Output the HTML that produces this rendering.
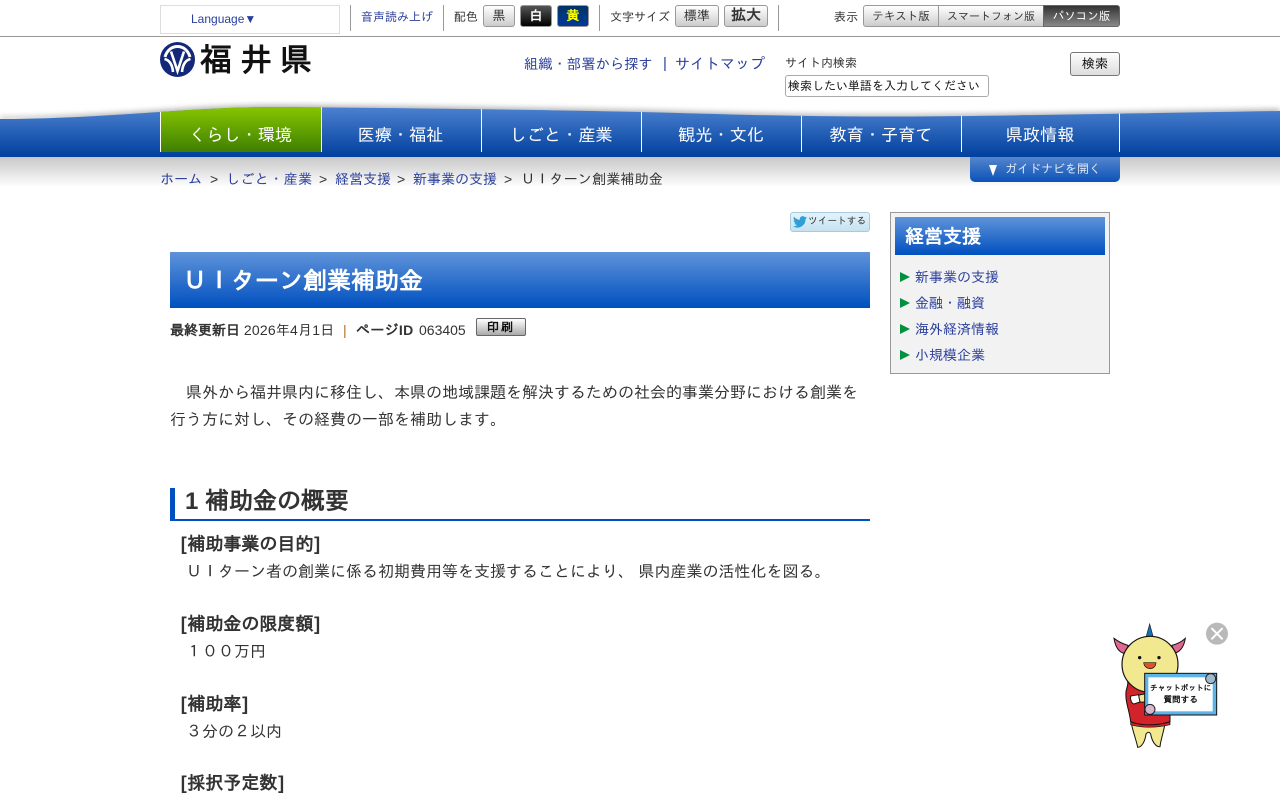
<!DOCTYPE html>
<html lang="ja"><head><meta charset="utf-8"><title>UIターン創業補助金</title>
<style>
*{box-sizing:border-box}
html,body{margin:0;padding:0;width:1280px;height:800px;overflow:hidden;background:#fff}
body{font-family:"Liberation Sans","IPAGothic",sans-serif;color:#333;position:relative}
.a{position:absolute;white-space:nowrap}
.l{color:#2a3f9c}
.sep{position:absolute;top:5px;width:1px;height:26px;background:#999}
.btn{position:absolute;top:5px;height:22px;border:1px solid #999;border-radius:3px;background:linear-gradient(#fff,#ccc);font-size:13px;line-height:20px;text-align:center;color:#333;white-space:nowrap}
.nav{position:absolute;top:108px;height:44px;font-size:17.200px;line-height:54px;text-align:center;color:#fff}
.side{position:absolute;left:915px;font-size:14px;color:#2a3f9c;white-space:nowrap}
.tri{position:absolute;left:900px;width:0;height:0;border-left:10px solid #00903f;border-top:5px solid transparent;border-bottom:5px solid transparent}
.body{position:absolute;font-size:16px;white-space:nowrap;color:#333}
.h4{position:absolute;left:180px;font-size:18px;font-weight:bold;white-space:nowrap;color:#333}
.h4 i{font-style:normal;margin:0 .7px}
.bc{position:absolute;top:171px;font-size:14px;white-space:nowrap}
</style></head><body>

<div class="a" style="left:0;top:36px;width:1280px;height:1px;background:#999"></div>
<div class="a" style="left:160px;top:5px;width:180px;height:29px;border:1px solid #ddd;font-size:12px;line-height:27px;padding-left:30px;color:#2a3f9c">Language▼</div>
<div class="sep" style="left:350px"></div>
<div class="a l" style="left:361px;top:10px;font-size:12px">音声読み上げ</div>
<div class="sep" style="left:443px"></div>
<div class="a" style="left:454px;top:10px;font-size:12px">配色</div>
<div class="btn" style="left:483px;width:32px">黒</div>
<div class="btn" style="left:520px;width:32px;background:linear-gradient(#555,#000);color:#fff;font-weight:bold">白</div>
<div class="btn" style="left:557px;width:32px;background:linear-gradient(#036,#003a9a);color:#ff0;font-weight:bold">黄</div>
<div class="sep" style="left:599px"></div>
<div class="a" style="left:610px;top:10px;font-size:12px">文字サイズ</div>
<div class="btn" style="left:675px;width:44px">標準</div>
<div class="btn" style="left:724px;width:44px;font-weight:bold;font-size:15px">拡大</div>
<div class="sep" style="left:778px"></div>
<div class="a" style="left:834px;top:10px;font-size:12px">表示</div>
<div class="btn" style="left:863px;width:76px;border-radius:3px 0 0 3px;font-size:11.500px;line-height:23px">テキスト版</div>
<div class="btn" style="left:938px;width:106px;border-radius:0;font-size:11px;line-height:23px">スマートフォン版</div>
<div class="btn" style="left:1043px;width:77px;border-radius:0 3px 3px 0;font-size:11.500px;line-height:23px;background:linear-gradient(#333,#888);color:#fff;border-color:#666">パソコン版</div>

<svg class="a" style="left:160px;top:42px" width="35" height="35" viewBox="0 0 35 35">
<circle cx="17.500" cy="17.500" r="17.500" fill="#14287a"/>
<path d="M5 15C7 8 12 4.500 17.500 4.500S28 8 30 15" fill="none" stroke="#fff" stroke-width="3"/>
<path d="M11 9.500L17.500 29 24 9.500M4.500 17c5 1 8 6 8.500 13M30.500 17c-5 1-8 6-8.500 13" fill="none" stroke="#fff" stroke-width="2.600"/>
</svg>
<div class="a" style="left:200px;top:41px;font-size:32px;line-height:38px;letter-spacing:8px;color:#111;font-weight:bold">福井県</div>

<div class="a l" style="left:524px;top:56px;font-size:14.300px">組織・部署から探す</div>
<div class="a" style="left:663px;top:55px;font-size:15px;color:#2a3f9c">|</div>
<div class="a l" style="left:675px;top:56px;font-size:15px">サイトマップ</div>
<div class="a" style="left:785px;top:56px;font-size:12px">サイト内検索</div>
<div class="a" style="left:785px;top:75px;width:204px;height:22px;border:1px solid #aaa;border-radius:3px;font-size:12px;line-height:20px;padding-left:2px;color:#111;background:#fff">検索したい単語を入力してください</div>
<div class="a" style="left:1070px;top:52px;width:50px;height:24px;border:1px solid #777;border-radius:3px;background:linear-gradient(#fdfdfd,#ddd);font-size:13px;line-height:22px;text-align:center;color:#111">検索</div>

<svg class="a" style="left:0;top:90px" width="1280" height="100" viewBox="0 0 1280 100">
<defs>
<linearGradient id="g" gradientUnits="userSpaceOnUse" x1="0" y1="18" x2="0" y2="67"><stop offset="0" stop-color="#4a80cf"/><stop offset="1" stop-color="#003f9e"/></linearGradient>
<linearGradient id="gr" gradientUnits="userSpaceOnUse" x1="0" y1="18" x2="0" y2="62"><stop offset="0" stop-color="#84c400"/><stop offset="1" stop-color="#3f7f00"/></linearGradient>
<linearGradient id="s" x1="0" y1="0" x2="0" y2="1"><stop offset="0" stop-color="#000" stop-opacity=".22"/><stop offset="1" stop-color="#000" stop-opacity="0"/></linearGradient>
<filter id="b" x="-5%" y="-30%" width="110%" height="160%"><feGaussianBlur stdDeviation="3"/></filter>
<clipPath id="c"><path d="M0 29C50 29 100 26 160 22C200 19 240 17 280 17C400 18 560 20 640 22C720 24 800 27 900 26.500C1000 26 1100 24 1280 21V67H0Z"/></clipPath>
</defs>
<rect x="0" y="67" width="1280" height="30" fill="url(#s)"/>
<path d="M0 27C50 27 100 24 160 20C200 17 240 15 280 15C400 16 560 18 640 20C720 22 800 25 900 24.500C1000 24 1100 22 1280 19V30H0Z" fill="#000" opacity=".3" filter="url(#b)"/>
<path d="M0 29C50 29 100 26 160 22C200 19 240 17 280 17C400 18 560 20 640 22C720 24 800 27 900 26.500C1000 26 1100 24 1280 21V67H0Z" fill="url(#g)"/>
<g clip-path="url(#c)">
<rect x="160" y="10" width="161" height="52" fill="url(#gr)"/>
<path d="M160.500 10V62M321.500 10V62M481.500 10V62M641.500 10V62M801.500 10V62M961.500 10V62M1119.500 10V62" stroke="#fff" stroke-width="1"/>
</g>
</svg>
<div class="nav" style="left:160px;width:161px">くらし・環境</div>
<div class="nav" style="left:320px;width:161px">医療・福祉</div>
<div class="nav" style="left:481px;width:160px">しごと・産業</div>
<div class="nav" style="left:641px;width:160px">観光・文化</div>
<div class="nav" style="left:801px;width:160px">教育・子育て</div>
<div class="nav" style="left:961px;width:158px">県政情報</div>

<div class="a" style="left:970px;top:157px;width:150px;height:25px;border-radius:0 0 5px 5px;background:linear-gradient(#5586cc,#0b52b8);color:#dfe8f6;font-size:12px;line-height:25px;padding-left:35px">ガイドナビを開く</div>
<div class="a" style="left:989px;top:165px;width:0;height:0;border-top:11px solid #fff;border-left:4px solid transparent;border-right:4px solid transparent"></div>

<span class="bc l" style="left:160px">ホーム</span><span class="bc" style="left:210px">&gt;</span>
<span class="bc l" style="left:226px;letter-spacing:.4px">しごと・産業</span><span class="bc" style="left:319px">&gt;</span>
<span class="bc l" style="left:335px">経営支援</span><span class="bc" style="left:397px">&gt;</span>
<span class="bc l" style="left:413px">新事業の支援</span><span class="bc" style="left:504px">&gt;</span>
<span class="bc" style="left:521px;letter-spacing:.2px">ＵＩターン創業補助金</span>

<div class="a" style="left:790px;top:212px;width:80px;height:20px;border:1px solid #a9c9dd;border-radius:3px;background:linear-gradient(#e4f3fb,#c5e2f1)"></div>
<svg class="a" style="left:793px;top:216px" width="14" height="12" viewBox="0 0 24 20"><path d="M24 2.400c-.9.400-1.800.7-2.800.8 1-.6 1.800-1.500 2.200-2.700-1 .6-2 1-3.100 1.200A4.900 4.900 0 0 0 11.900 6.200C7.800 6 4.200 4 1.700.9c-1.300 2.200-.7 5.100 1.500 6.600-.8 0-1.600-.2-2.200-.6 0 2.400 1.700 4.400 3.900 4.900-.7.200-1.500.2-2.200.1.600 2 2.400 3.400 4.600 3.400A9.900 9.900 0 0 1 0 17.300 14 14 0 0 0 21.500 4.900c1-.7 1.800-1.600 2.500-2.500z" fill="#2f9fd8"/></svg>
<div class="a" style="left:808px;top:216px;font-size:9.700px;color:#333">ツイートする</div>

<div class="a" style="left:170px;top:252px;width:700px;height:56px;background:linear-gradient(#5f93d9,#0050c0);color:#fff;font-size:24px;font-weight:bold;line-height:60px;padding-left:13px">ＵＩターン創業補助金</div>

<div class="a" style="left:170px;top:322px;font-size:14px;color:#333"><b>最終更新日</b> <span style="letter-spacing:.2px">2026年4月1日</span></div>
<div class="a" style="left:343px;top:322px;font-size:14px;color:#b07020">|</div>
<div class="a" style="left:356px;top:322px;font-size:14px;color:#333;font-weight:bold;letter-spacing:.3px">ページID</div>
<div class="a" style="left:419px;top:322px;font-size:14px;color:#333">063405</div>
<div class="a" style="left:476px;top:318px;width:50px;height:18px;border:1px solid #666;border-radius:2px;background:linear-gradient(#fff,#aaa);font-size:12px;font-weight:bold;line-height:16px;text-align:center;color:#111;letter-spacing:2px">印刷</div>

<div class="body" style="left:170px;top:380px;line-height:27px">&#12288;県外から福井県内に移住し、本県の地域課題を解決するための社会的事業分野における創業を<br>行う方に対し、その経費の一部を補助します。</div>

<div class="a" style="left:170px;top:488px;width:700px;height:33px;border-left:5px solid #0050c0;border-bottom:2px solid #0050c0;font-size:24px;font-weight:bold;line-height:28px;padding-left:10px;color:#333">1 補助金の概要</div>

<div class="h4" style="top:534px"><i>[</i>補助事業の目的<i>]</i></div>
<div class="body" style="left:186px;top:563px">ＵＩターン者の創業に係る初期費用等を支援することにより、 県内産業の活性化を図る。</div>
<div class="h4" style="top:614px"><i>[</i>補助金の限度額<i>]</i></div>
<div class="body" style="left:186px;top:643px">１００万円</div>
<div class="h4" style="top:694px"><i>[</i>補助率<i>]</i></div>
<div class="body" style="left:186px;top:723px">３分の２以内</div>
<div class="h4" style="top:773px"><i>[</i>採択予定数<i>]</i></div>

<div class="a" style="left:890px;top:212px;width:220px;height:162px;border:1px solid #999;background:#f2f2f2"></div>
<div class="a" style="left:895px;top:217px;width:210px;height:38px;background:linear-gradient(#5f93d9,#0050c0);color:#fff;font-size:19px;font-weight:bold;line-height:42px;padding-left:10px">経営支援</div>
<div class="tri" style="top:272px"></div><div class="side" style="top:269px">新事業の支援</div>
<div class="tri" style="top:298px"></div><div class="side" style="top:295px">金融・融資</div>
<div class="tri" style="top:324px"></div><div class="side" style="top:321px">海外経済情報</div>
<div class="tri" style="top:350px"></div><div class="side" style="top:347px">小規模企業</div>

<svg class="a" style="left:1090px;top:610px" width="150" height="150" viewBox="0 0 450 450">
<circle cx="381" cy="71" r="33" fill="#b9b9b9"/>
<path d="M366 56l30 30M396 56l-30 30" stroke="#fff" stroke-width="6" stroke-linecap="round"/>
<path d="M168 82L179 42 190 82Z" fill="#1a6fb0" stroke="#123" stroke-width="2"/>
<path d="M72 85C76 112 88 130 110 132L114 106C98 102 84 94 72 85Z" fill="#e0678f" stroke="#111" stroke-width="3"/>
<path d="M286 85C282 110 270 128 250 130L246 106C262 102 276 94 286 85Z" fill="#e0678f" stroke="#111" stroke-width="3"/>
<path d="M125 345C132 375 140 395 143 412C155 412 165 395 168 372C175 364 178 366 182 372C186 395 198 412 210 410C212 390 220 370 224 345Z" fill="#f2e88f" stroke="#111" stroke-width="3"/>
<path d="M110 205L150 215H240V335C200 348 155 348 122 335C118 300 105 275 108 245C110 232 118 220 110 205Z" fill="#d2232a" stroke="#111" stroke-width="3"/>
<path d="M122 336C155 348 200 348 240 336V344C200 354 155 354 122 344Z" fill="#d2232a" stroke="#111" stroke-width="2"/>
<circle cx="180" cy="163" r="84" fill="#f2e88f" stroke="#111" stroke-width="3.500"/>
<circle cx="149" cy="143" r="5" fill="#111"/><circle cx="207" cy="143" r="5" fill="#111"/>
<path d="M161 158H198C197 182 164 182 161 158Z" fill="#e2502a" stroke="#111" stroke-width="2"/>
<path d="M122 258C120 268 124 280 132 282L150 276 146 254Z" fill="#fff" stroke="#111" stroke-width="3"/>
<path d="M146 256C160 250 178 252 186 260 184 272 165 278 150 276Z" fill="#f2e88f" stroke="#111" stroke-width="3"/>
<rect x="164" y="190" width="216" height="125" fill="#5eb3e8" stroke="#111" stroke-width="3"/>
<rect x="175" y="202" width="193" height="102" fill="#fff"/>
<circle cx="362" cy="206" r="15" fill="#9fb8cc" stroke="#222" stroke-width="3"/>
<circle cx="180" cy="298" r="15" fill="#d9b5cf" stroke="#222" stroke-width="3"/>
<text x="272" y="242" text-anchor="middle" font-size="23" font-weight="bold" fill="#111">チャットボットに</text>
<text x="272" y="278" text-anchor="middle" font-size="26" font-weight="bold" fill="#111">質問する</text>
</svg>
</body></html>
